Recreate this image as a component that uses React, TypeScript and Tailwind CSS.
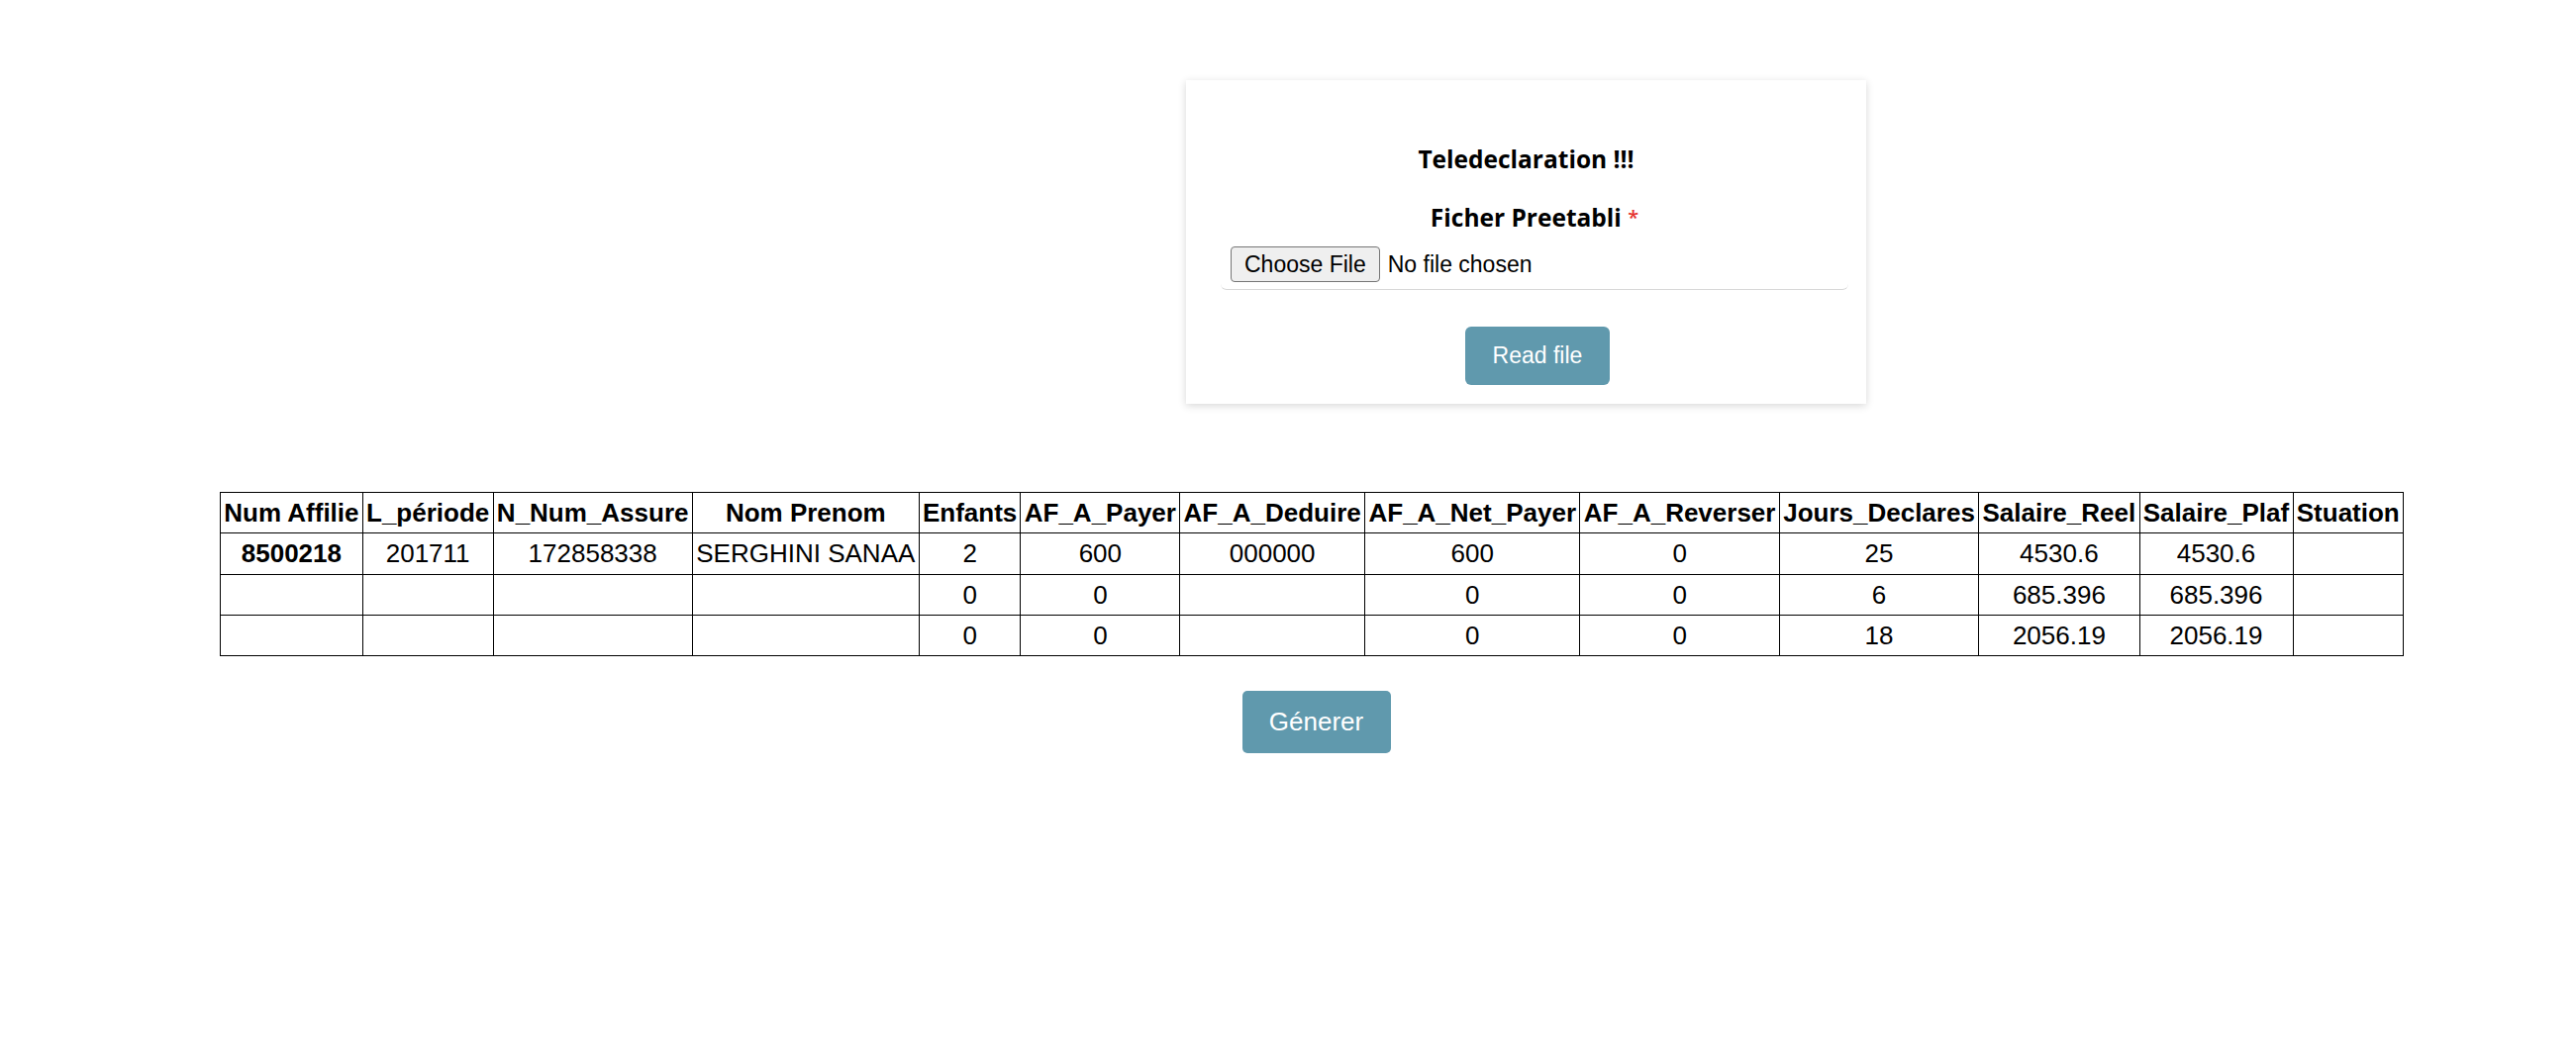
import React from "react";

const headers = [
  "Num Affilie",
  "L_période",
  "N_Num_Assure",
  "Nom Prenom",
  "Enfants",
  "AF_A_Payer",
  "AF_A_Deduire",
  "AF_A_Net_Payer",
  "AF_A_Reverser",
  "Jours_Declares",
  "Salaire_Reel",
  "Salaire_Plaf",
  "Stuation",
];

const rows: string[][] = [
  ["8500218", "201711", "172858338", "SERGHINI SANAA", "2", "600", "000000", "600", "0", "25", "4530.6", "4530.6", ""],
  ["", "", "", "", "0", "0", "", "0", "0", "6", "685.396", "685.396", ""],
  ["", "", "", "", "0", "0", "", "0", "0", "18", "2056.19", "2056.19", ""],
];

const App: React.FC = () => {
  return (
    <div className="min-h-screen bg-white pt-[81px] text-black font-['Liberation_Sans',Arial,sans-serif]">
      {/* Upload card */}
      <div className="ml-[1198px] w-[687px] h-[327px] bg-white shadow-[0_2px_8px_rgba(0,0,0,0.16)] pt-[63px] pl-[35px] pr-[18px]">
        <h3 className="-ml-[35px] -mr-[18px] text-center text-[24.5px] leading-[34px] font-bold font-['Open_Sans',sans-serif]">
          Teledeclaration !!!
        </h3>
        <div className="mt-[25px] text-center text-[24.5px] leading-[34px] font-bold font-['Open_Sans',sans-serif]">
          Ficher Preetabli <span className="text-[20px] font-semibold text-[#e5322d] align-top">*</span>
        </div>
        <div className="mt-[12px] flex items-center gap-[8px] pl-[10px] pb-[7px] border-b border-[#d8d8d8] rounded-[6px]">
          <button className="h-[36px] px-[13px] text-[23px] leading-[26px] bg-[#efefef] border border-[#767676] rounded-[4px] text-black">
            Choose File
          </button>
          <span className="text-[23px] leading-[26px]">No file chosen</span>
        </div>
        <div className="mt-[37px] flex justify-center pl-[6px]">
          <button className="w-[146px] h-[59px] flex items-center justify-center bg-[#6099ad] text-white text-[23px] rounded-[6px]">
            Read file
          </button>
        </div>
      </div>

      {/* Result table */}
      <div className="ml-[222px] mt-[89px] w-fit">
        <table className="w-[2206px] border-collapse text-[26px] leading-[30.25px]">
          <thead>
            <tr>
              {headers.map((h) => (
                <th key={h} className="border border-black px-[3px] py-[5px] font-bold text-center whitespace-nowrap">
                  {h}
                </th>
              ))}
            </tr>
          </thead>
          <tbody>
            {rows.map((r, i) => (
              <tr key={i}>
                {r.map((c, j) =>
                  j === 0 ? (
                    <th key={j} className="border border-black px-[3px] py-[5px] font-bold text-center whitespace-nowrap">
                      {c}
                    </th>
                  ) : (
                    <td key={j} className="border border-black px-[3px] py-[5px] text-center whitespace-nowrap">
                      {c}
                    </td>
                  )
                )}
              </tr>
            ))}
          </tbody>
        </table>
        <div className="mt-[35px] flex justify-center pl-[9px]">
          <button className="w-[150px] h-[63px] flex items-center justify-center bg-[#6099ad] text-white text-[26px] rounded-[5px]">
            Génerer
          </button>
        </div>
      </div>
    </div>
  );
};

export default App;
